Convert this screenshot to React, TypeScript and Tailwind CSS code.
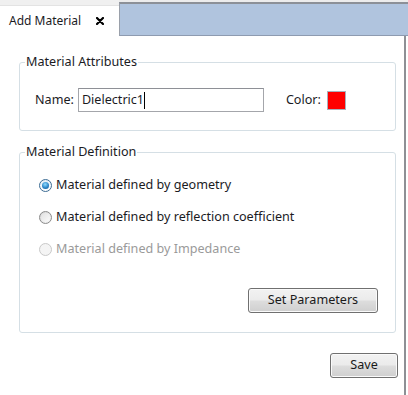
import React from "react";

const font = { fontFamily: '"Noto Sans", "Open Sans", sans-serif' };

function Radio({ state }: { state: "checked" | "off" | "disabled" }) {
  if (state === "checked") {
    return (
      <div className="w-[13px] h-[13px] shrink-0 rounded-full border border-[#3d6c94] bg-[linear-gradient(to_bottom,#e4eef6,#ffffff)] flex items-center justify-center">
        <div className="w-[7px] h-[7px] rounded-full bg-[radial-gradient(circle_at_45%_35%,#8fdcff,#2d86c8_55%,#0b4c86)]" />
      </div>
    );
  }
  if (state === "off") {
    return (
      <div className="w-[13px] h-[13px] shrink-0 rounded-full border border-[#8b8b8b] bg-[linear-gradient(135deg,#d6d6d6,#f6f6f6)] flex items-center justify-center">
        <div className="w-[9px] h-[9px] rounded-full bg-[linear-gradient(135deg,#e2e2e2,#fbfbfb)]" />
      </div>
    );
  }
  return (
    <div className="w-[13px] h-[13px] shrink-0 rounded-full border border-[#c9c9c9] bg-[#f4f4f4]" />
  );
}

function Button({ children, className = "" }: { children: React.ReactNode; className?: string }) {
  return (
    <div
      className={
        "h-[25px] rounded-[3px] border border-[#707070] bg-[linear-gradient(to_bottom,#f2f2f2_0%,#ebebeb_48%,#dddddd_52%,#cfcfcf_100%)] shadow-[inset_0_0_0_1px_#fafafa] flex items-center justify-center text-[12.6px] text-[#1a1a1a] " +
        className
      }
    >
      {children}
    </div>
  );
}

export default function App() {
  return (
    <div className="w-[408px] h-[395px] bg-white overflow-hidden text-[12.6px] text-[#1b1b1f]" style={font}>
      {/* header */}
      <div className="flex h-[36px]">
        <div className="w-[119px] pt-[5px] bg-[#f0f0f0] flex flex-col">
          <div className="flex-1 bg-white border-t border-[#e3e3e3] flex items-center pl-[9px]">
            <span className="leading-[16px] text-[12px]">Add Material</span>
            <svg className="ml-[15px]" width="8" height="8" viewBox="0 0 8 8">
              <path d="M1 1 L7 7 M7 1 L1 7" stroke="#000" strokeWidth="2.2" strokeLinecap="round" />
            </svg>
          </div>
        </div>
        <div className="flex-1 pt-[2px] bg-[#ececec] flex flex-col">
          <div className="flex-1 bg-[#b0c4de] border-t-[2px] border-t-[#8c9097] border-b border-b-[#8e9bb0] border-l border-l-[#9aa0aa]" />
        </div>
      </div>

      {/* content */}
      <div className="w-[406px] h-[359px] border-r-[2px] border-r-[#8e9095] pl-[19px] pr-[8px] flex flex-col">
        <fieldset className="mt-[18px] border border-[#d5dfe5] rounded-[3px] pb-[18px]">
          <legend className="ml-[5px] px-[1px] leading-[16px]">Material Attributes</legend>
          <div className="mt-[18px] pl-[15px] flex items-center">
            <span>Name:</span>
            <div className="ml-[4px] w-[186px] h-[24px] border border-[#a4a6ab] border-t-[#8e9096] flex items-center pl-[3px]">
              <span>Dielectric1</span>
              <span className="w-[1px] h-[17px] bg-black" />
            </div>
            <span className="ml-[22px]">Color:</span>
            <div className="ml-[6px] w-[19px] h-[19px] border border-[#a9b1bd] bg-[#ff0000]" />
          </div>
        </fieldset>

        <fieldset className="mt-[13px] border border-[#d5dfe5] rounded-[3px] pb-[19px]">
          <legend className="ml-[5px] px-[1px] leading-[16px]">Material Definition</legend>
          <div className="mt-[17px] pl-[19px] flex flex-col gap-[16px]">
            <div className="flex items-center gap-[4px] h-[16px]">
              <Radio state="checked" />
              <span>Material defined by geometry</span>
            </div>
            <div className="flex items-center gap-[4px] h-[16px]">
              <Radio state="off" />
              <span>Material defined by reflection coefficient</span>
            </div>
            <div className="flex items-center gap-[4px] h-[16px]">
              <Radio state="disabled" />
              <span className="text-[#9a9a9a]">Material defined by Impedance</span>
            </div>
          </div>
          <div className="mt-[31px] flex justify-end pr-[17px]">
            <Button className="w-[130px]">Set Parameters</Button>
          </div>
        </fieldset>

        <div className="mt-[20px] flex justify-end mr-[-2px]">
          <Button className="w-[68px]">Save</Button>
        </div>
      </div>
    </div>
  );
}
